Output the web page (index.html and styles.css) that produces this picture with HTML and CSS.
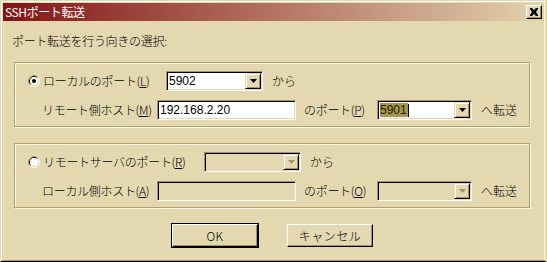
FILE: index.html
```html
<!DOCTYPE html>
<html lang="ja">
<head>
<meta charset="utf-8">
<title>SSHポート転送</title>
<link rel="stylesheet" href="styles.css">
</head>
<body>
<div class="window">
  <div class="titlebar">
    <span class="title">SSHポート転送</span>
    <span class="close-btn">
      <svg width="14" height="12" viewBox="0 0 14 12"><path d="M3 2h2l2 2 2-2h2v1l-2 3 2 3v1H9L7 8 5 10H3V9l2-3-2-3z" fill="#000"/></svg>
    </span>
  </div>
  <div class="content">
    <div class="prompt">ポート転送を行う向きの選択:</div>

    <div class="group">
      <div class="row">
        <span class="radio-cell local-cell">
          <svg class="radio" width="12" height="12" viewBox="0 0 12 12">
            <path d="M2.11 9.89A5.5 5.5 0 0 1 9.89 2.11" fill="none" stroke="#a4946a" stroke-width="1"/>
            <path d="M9.89 2.11A5.5 5.5 0 0 1 2.11 9.89" fill="none" stroke="#ffffff" stroke-width="1"/>
            <path d="M2.82 9.18A4.5 4.5 0 0 1 9.18 2.82" fill="none" stroke="#000000" stroke-width="1"/>
            <path d="M9.18 2.82A4.5 4.5 0 0 1 2.82 9.18" fill="none" stroke="#e4d8b0" stroke-width="1"/>
            <circle cx="6" cy="6" r="4" fill="#ffffff"/>
            <circle cx="6" cy="6" r="2" fill="#000000"/>
          </svg>
          <span class="radio-label">ローカルのポート(<u>L</u>)</span>
        </span>
        <span class="combo combo-from">
          <span class="value">5902</span>
          <span class="drop"><svg width="7" height="4" viewBox="0 0 7 4"><path d="M0 0h7L3.5 4z" fill="#000"/></svg></span>
        </span>
        <span class="suffix">から</span>
      </div>
      <div class="row">
        <span class="label host-label">リモート側ホスト(<u>M</u>)</span>
        <span class="field host-field"><span class="value">192.168.2.20</span></span>
        <span class="label port-label">のポート(<u>P</u>)</span>
        <span class="combo combo-port">
          <span class="value"><span class="sel">5901</span><span class="caret"></span></span>
          <span class="drop"><svg width="7" height="4" viewBox="0 0 7 4"><path d="M0 0h7L3.5 4z" fill="#000"/></svg></span>
        </span>
        <span class="suffix">へ転送</span>
      </div>
    </div>

    <div class="group group-remote">
      <div class="row">
        <span class="radio-cell remote-cell">
          <svg class="radio" width="12" height="12" viewBox="0 0 12 12">
            <path d="M2.11 9.89A5.5 5.5 0 0 1 9.89 2.11" fill="none" stroke="#a4946a" stroke-width="1"/>
            <path d="M9.89 2.11A5.5 5.5 0 0 1 2.11 9.89" fill="none" stroke="#ffffff" stroke-width="1"/>
            <path d="M2.82 9.18A4.5 4.5 0 0 1 9.18 2.82" fill="none" stroke="#000000" stroke-width="1"/>
            <path d="M9.18 2.82A4.5 4.5 0 0 1 2.82 9.18" fill="none" stroke="#e4d8b0" stroke-width="1"/>
            <circle cx="6" cy="6" r="4" fill="#ffffff"/>
          </svg>
          <span class="radio-label">リモートサーバのポート(<u>R</u>)</span>
        </span>
        <span class="combo combo-from disabled">
          <span class="value"></span>
          <span class="drop"><svg width="7" height="4" viewBox="0 0 7 4"><path d="M0 0h7L3.5 4z" fill="#a4946a"/></svg></span>
        </span>
        <span class="suffix">から</span>
      </div>
      <div class="row">
        <span class="label host-label">ローカル側ホスト(<u>A</u>)</span>
        <span class="field host-field disabled"><span class="value"></span></span>
        <span class="label port-label">のポート(<u>O</u>)</span>
        <span class="combo combo-port disabled">
          <span class="value"></span>
          <span class="drop"><svg width="7" height="4" viewBox="0 0 7 4"><path d="M0 0h7L3.5 4z" fill="#a4946a"/></svg></span>
        </span>
        <span class="suffix">へ転送</span>
      </div>
    </div>

    <div class="buttons">
      <span class="button default">OK</span>
      <span class="button">キャンセル</span>
    </div>
  </div>
</div>
</body>
</html>
```

FILE: styles.css
```css
html, body {
  margin: 0;
  padding: 0;
  background: #e4d8b0;
}

body {
  font-family: "Noto Sans CJK JP", "Liberation Sans", sans-serif;
  font-size: 12px;
  font-weight: 300;
  line-height: 14px;
  color: #000;
}

.window {
  width: 547px;
  height: 262px;
  box-sizing: border-box;
  background: #e4d8b0;
  border-style: solid;
  border-width: 1px 2px 1px 1px;
  border-color: #e4d8b0 #e4d8b0 #000 #e4d8b0;
  box-shadow: inset 1px 1px 0 #ffffff, inset 0 -1px 0 #a4946a, inset -1px 0 0 #fff4dc;
  padding: 2px 1px 2px 2px;
  overflow: hidden;
}

.titlebar {
  height: 18px;
  background: linear-gradient(to right, #841414, #e2d2ae);
  display: flex;
  align-items: center;
  justify-content: space-between;
  padding: 0 2px 0 2px;
}

.title {
  color: #ffffff;
  font-size: 12px;
  font-weight: 400;
  letter-spacing: -0.4px;
}

.close-btn {
  width: 16px;
  height: 14px;
  box-sizing: border-box;
  background: #e4d8b0;
  border-style: solid;
  border-width: 1px;
  border-color: #ffffff #000 #000 #ffffff;
  box-shadow: inset -1px -1px 0 #a4946a;
  display: flex;
  align-items: flex-start;
  justify-content: flex-start;
}

.close-btn svg {
  display: block;
}

.content {
  padding: 0 0 0 11px;
}

.prompt {
  margin: 13px 0 14px -2px;
  letter-spacing: -0.3px;
}

.group {
  width: 516px;
  height: 65px;
  box-sizing: border-box;
  border: 1px solid #b4a06a;
  box-shadow: inset 1px 1px 0 #fff8e4, 1px 1px 0 #fff8e4;
  padding: 8px 0 0 0;
}

.group-remote {
  margin-top: 16px;
}

.row {
  display: flex;
  align-items: center;
  height: 20px;
  white-space: nowrap;
}

.row + .row {
  margin-top: 9px;
}

.radio-cell {
  display: flex;
  align-items: center;
  margin-left: 13px;
}

.local-cell {
  width: 138px;
}

.remote-cell {
  width: 176px;
}

.radio {
  display: block;
  flex: none;
}

.radio-label {
  margin-left: 3px;
  letter-spacing: -0.3px;
}

.label {
  letter-spacing: -0.3px;
}

.host-label {
  margin-left: 27px;
  width: 115px;
}

.port-label {
  margin-left: 8px;
  width: 73px;
}

.suffix {
  margin-left: 9px;
}

.field,
.combo {
  position: relative;
  height: 20px;
  box-sizing: border-box;
  background: #ffffff;
  border-style: solid;
  border-width: 1px;
  border-color: #a4946a #ffffff #ffffff #a4946a;
  box-shadow: inset 1px 1px 0 #000, inset -1px -1px 0 #e4d8b0;
  display: flex;
  align-items: center;
  font-family: "Liberation Sans", sans-serif;
  font-weight: 400;
  font-size: 12px;
}

.field.disabled,
.combo.disabled {
  background: #e4d8b0;
}

.value {
  padding-left: 2px;
  display: flex;
  align-items: center;
  height: 14px;
}

.host-field {
  width: 139px;
}

.combo-from {
  width: 97px;
}

.combo-port {
  width: 95px;
}

.sel {
  background: #a8964c;
  color: #1c1c00;
  line-height: 14px;
  padding: 0 1px 0 0;
}

.caret {
  display: inline-block;
  width: 1px;
  height: 13px;
  background: #000;
}

.drop {
  position: absolute;
  right: 1px;
  top: 1px;
  width: 16px;
  height: 16px;
  box-sizing: border-box;
  background: #e4d8b0;
  border-style: solid;
  border-width: 1px;
  border-color: #e4d8b0 #000 #000 #e4d8b0;
  box-shadow: inset 1px 1px 0 #fff, inset -1px -1px 0 #a4946a;
  display: flex;
  align-items: center;
  justify-content: center;
}

.drop svg {
  display: block;
}

.buttons {
  display: flex;
  margin: 16px 0 0 158px;
}

.button {
  width: 86px;
  height: 23px;
  box-sizing: border-box;
  display: flex;
  align-items: center;
  justify-content: center;
  background: #e4d8b0;
  border-style: solid;
  border-width: 1px;
  border-color: #ffffff #000 #000 #ffffff;
  box-shadow: inset -1px -1px 0 #a4946a;
  letter-spacing: 0.5px;
}

.button.default {
  outline: 1px solid #000;
  margin-right: 29px;
}
```
